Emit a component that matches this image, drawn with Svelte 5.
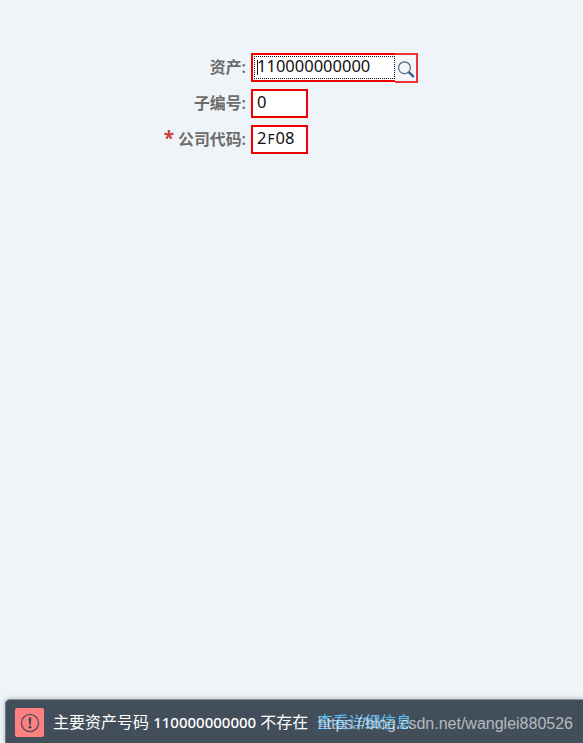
<script>
  let asset = "110000000000";
  let subNumber = "0";
  let company = ["2", "F", "08"];
  let message = { before: "主要资产号码", number: "110000000000", after: "不存在" };
</script>

<div class="screen">
  <div class="form">
    <div class="row">
      <div class="label">资产:</div>
      <div class="field wide">
        <div class="focus"><span class="caret"></span><span class="value">{asset}</span></div>
        <button class="search" aria-label="search">
          <svg width="20" height="22" viewBox="0 0 20 22">
            <circle cx="8.5" cy="8.7" r="5.9" fill="none" stroke="#4e6b83" stroke-width="1.2" />
            <path d="M12.6 12.8L17.8 18" stroke="#2b5f8f" stroke-width="2.4" />
          </svg>
        </button>
      </div>
    </div>
    <div class="row">
      <div class="label">子编号:</div>
      <div class="field"><span class="value">{subNumber}</span></div>
    </div>
    <div class="row">
      <div class="label"><span class="required">*</span>公司代码:</div>
      <div class="field">
        <span class="value">{company[0]}<span class="small">{company[1]}</span>{company[2]}</span>
      </div>
    </div>
  </div>

  <div class="footer">
    <div class="alert">
      <svg width="20" height="20" viewBox="0 0 20 20">
        <circle cx="10" cy="10" r="8.6" fill="none" stroke="#49515f" stroke-width="1.3" />
        <path d="M8.6 4.5h2.8l-.6 7.2H9.2z" fill="#3c4856" />
        <circle cx="10" cy="14.2" r="1.4" fill="#3c4856" />
      </svg>
    </div>
    <div class="message">{message.before} <span class="number">{message.number}</span> {message.after}</div>
    <a class="details" href="#details">查看详细信息</a>
    <span class="watermark">https://blog.csdn.net/wanglei880526</span>
  </div>
</div>

<style>
  :global(body) {
    margin: 0;
    background: #eff4f8;
  }

  .screen {
    display: flex;
    flex-direction: column;
    justify-content: space-between;
    height: 743px;
    overflow: hidden;
    background: #eff4f8;
    font-family: "Noto Sans", "Noto Sans CJK SC", sans-serif;
  }

  .form {
    display: flex;
    flex-direction: column;
    gap: 7px;
    padding-top: 53px;
  }

  .row {
    display: flex;
    height: 29px;
  }

  .label {
    width: 246px;
    margin-right: 5px;
    text-align: right;
    font-size: 15.9px;
    line-height: 28px;
    font-weight: 600;
    color: #6c6c6c;
    white-space: nowrap;
  }

  .required {
    margin-right: 4px;
    font-size: 19px;
    line-height: 20px;
    font-weight: 700;
    color: #cc3d3d;
  }

  .field {
    display: flex;
    box-sizing: border-box;
    width: 57px;
    height: 29px;
    padding-left: 4px;
    border: 2px solid #ee0000;
    background: #fff;
  }

  .field.wide {
    width: 167px;
    padding-left: 0;
    border-right: 0;
  }

  .value {
    font-size: 16.5px;
    line-height: 22px;
    color: #111;
    white-space: nowrap;
  }

  .small {
    margin: 0 1px;
    font-size: 13.5px;
  }

  .focus {
    display: flex;
    box-sizing: border-box;
    width: 142px;
    height: 23px;
    margin: 1px 0 0 1px;
    padding-left: 2px;
    border: 1px dotted #111;
  }

  .focus .value {
    line-height: 18px;
  }

  .caret {
    width: 1px;
    height: 15px;
    margin-top: 3px;
    margin-right: -1px;
    background: #111;
  }

  .search {
    display: block;
    box-sizing: border-box;
    width: 23px;
    height: 30px;
    margin: -2px 0 0;
    padding: 4px 0 0 1px;
    border: 2px solid #f0323a;
    border-left: 0;
    background: #f3f5f8;
  }

  .search svg {
    display: block;
  }

  .footer {
    position: relative;
    display: flex;
    box-sizing: border-box;
    height: 44px;
    margin-left: 5px;
    padding: 8px 0 0 9px;
    border-top: 1px solid #8d969f;
    border-left: 1px solid #697580;
    border-top-left-radius: 5px;
    background: #424e5a;
    box-shadow: 0 0 5px rgba(60, 75, 90, 0.4);
    white-space: nowrap;
  }

  .alert {
    display: flex;
    align-items: center;
    justify-content: center;
    width: 29px;
    height: 29px;
    border-radius: 2px;
    background: #ff8080;
  }

  .message,
  .details {
    font-size: 16px;
    line-height: 28px;
    color: #fff;
  }

  .message {
    width: 264px;
    margin-left: 9px;
  }

  .number {
    font-size: 15px;
    font-weight: 500;
  }

  .details {
    font-size: 15.8px;
    color: #5fc0f5;
    text-decoration: none;
  }

  /* overlaps the details link */
  .watermark {
    position: absolute;
    right: 10px;
    top: 14px;
    font-family: "Liberation Sans", Arial, sans-serif;
    font-size: 16px;
    line-height: 20px;
    color: rgba(255, 255, 255, 0.62);
  }
</style>
